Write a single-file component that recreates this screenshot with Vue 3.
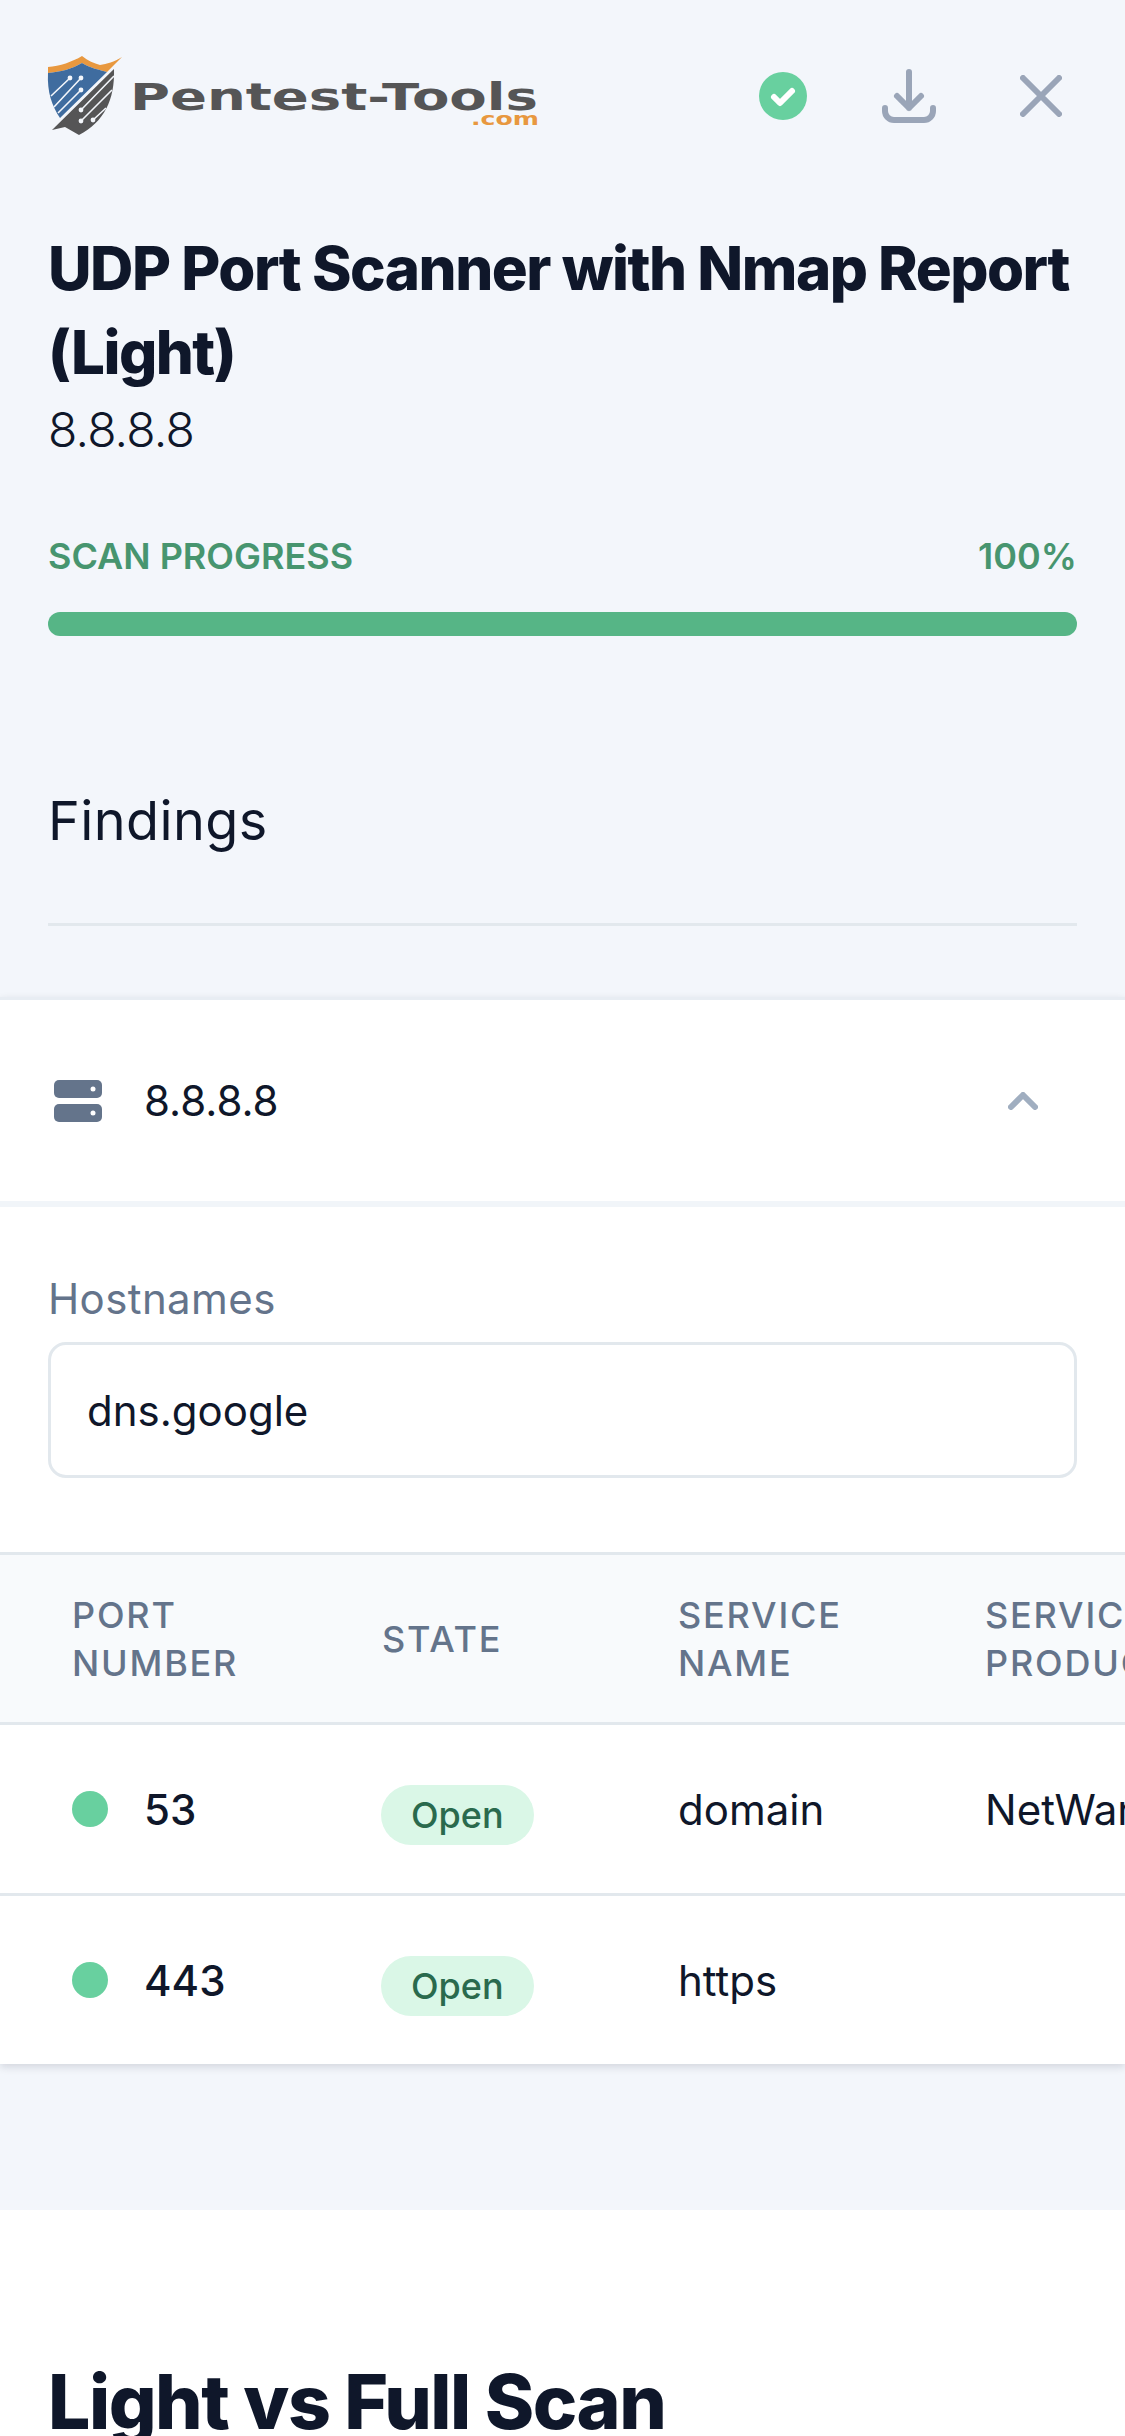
<template>
  <div class="page">
    <section class="top">
      <header class="head">
        <svg class="logo" viewBox="0 0 500 100" width="500" height="100">
          <g transform="translate(-46,-46)">
            <path d="M48 67 C60 66 72 62 82 56 C88 61 94 63 100 65 C107 64 114 62 122 57 L107 72 C100 70 90 68 82 63 C72 69 60 72 48 73 Z" fill="#e8983f" />
            <path d="M48 73 C60 72 72 69 82 63 C90 68 100 70 107 72 L60 118 C52 106 47 92 48 73 Z" fill="#3f6c9f" />
            <path d="M114 69 C115 100 104 122 79 135 L65 127 L52 130 Z" fill="#555556" />
            <g fill="none" stroke="#f3f6fb" stroke-width="1.6">
              <path d="M51 96 L70 78 M54 107 L81 78 M58 113 L81 90" />
              <path d="M81 110 L114 76 M81 121 L112 90 M93 120 L106 108" />
            </g>
            <g fill="#f3f6fb">
              <circle cx="70" cy="78" r="2.4" /><circle cx="81" cy="78" r="2.4" /><circle cx="81" cy="90" r="2.4" />
              <circle cx="81" cy="110" r="2.4" /><circle cx="81" cy="121" r="2.4" /><circle cx="93" cy="120" r="2.4" />
            </g>
          </g>
          <text x="84" y="64" class="logo-name" textLength="408" lengthAdjust="spacingAndGlyphs">Pentest-Tools</text>
          <text x="425" y="79" class="logo-com" textLength="68" lengthAdjust="spacingAndGlyphs">.com</text>
        </svg>
        <div class="actions">
          <svg width="48" height="48" viewBox="0 0 48 48">
            <circle cx="24" cy="24" r="24" fill="#68d09f" />
            <path d="M15 25 L21 31 L33 19" fill="none" stroke="#fff" stroke-width="6" stroke-linecap="round" stroke-linejoin="round" />
          </svg>
          <svg width="54" height="54" viewBox="0 0 54 54">
            <path d="M27 3 V39 M15 27 L27 39 L39 27 M3 39 V42 A9 9 0 0 0 12 51 H42 A9 9 0 0 0 51 42 V39" fill="none" stroke="#9aa5b8" stroke-width="6" stroke-linecap="round" stroke-linejoin="round" />
          </svg>
          <svg class="close" width="42" height="42" viewBox="0 0 42 42">
            <path d="M3 3 L39 39 M39 3 L3 39" fill="none" stroke="#9aa5b8" stroke-width="6" stroke-linecap="round" />
          </svg>
        </div>
      </header>

      <h1>UDP Port Scanner with Nmap Report (Light)</h1>
      <p class="target">8.8.8.8</p>

      <div class="progress-labels">
        <span>SCAN PROGRESS</span>
        <span>100%</span>
      </div>
      <div class="bar"></div>

      <h2>Findings</h2>
    </section>

    <section class="card">
      <div class="host-row">
        <svg width="48" height="42" viewBox="0 0 48 42">
          <rect x="0" y="0" width="48" height="18" rx="5" fill="#64748b" />
          <rect x="0" y="24" width="48" height="18" rx="5" fill="#64748b" />
          <circle cx="39" cy="9" r="2.5" fill="#fff" />
          <circle cx="39" cy="33" r="2.5" fill="#fff" />
        </svg>
        <span class="host-ip">8.8.8.8</span>
        <svg class="chevron" width="30" height="18" viewBox="0 0 30 18">
          <path d="M3 15 L15 3 L27 15" fill="none" stroke="#a0aec0" stroke-width="6" stroke-linecap="round" stroke-linejoin="round" />
        </svg>
      </div>

      <div class="hostnames">
        <label>Hostnames</label>
        <div class="field">dns.google</div>
      </div>

      <div class="table">
        <div class="row thead">
          <div class="c1">PORT<br />NUMBER</div>
          <div class="c2">STATE</div>
          <div class="c3">SERVICE<br />NAME</div>
          <div class="c4">SERVICE<br />PRODUCT</div>
        </div>
        <div v-for="p in ports" :key="p.port" class="row tbody">
          <div class="c1 port"><i class="dot"></i>{{ p.port }}</div>
          <div class="c2"><span class="pill">Open</span></div>
          <div class="c3">{{ p.name }}</div>
          <div class="c4">{{ p.product }}</div>
        </div>
      </div>
    </section>

    <section class="next">
      <h2>Light vs Full Scan</h2>
    </section>
  </div>
</template>

<script setup>
const ports = [
  { port: 53, name: 'domain', product: 'NetWare' },
  { port: 443, name: 'https', product: '' }
]
</script>

<style>
html, body {
  margin: 0;
  background: #f3f6fb;
}
</style>

<style scoped>
.page {
  width: 1125px;
  height: 2436px;
  overflow: hidden;
  font-family: Inter, "Liberation Sans", sans-serif;
  background: #f3f6fb;
  color: #0f172a;
}
.top {
  padding: 46px 48px 0;
}
.head {
  display: flex;
  justify-content: space-between;
  align-items: center;
  height: 100px;
}
.logo {
  margin-left: -2px;
  flex: none;
}
.logo-name {
  font: bold 37px "DejaVu Sans", sans-serif;
  fill: #555556;
}
.logo-com {
  font: bold 18px "DejaVu Sans", sans-serif;
  fill: #e8983f;
}
.actions {
  display: flex;
  align-items: center;
  gap: 75px;
  margin-right: 15px;
}
.close {
  margin-left: 9px;
}
h1 {
  margin: 80px 0 0;
  font-size: 60px;
  line-height: 84px;
  font-weight: 800;
  letter-spacing: -1.5px;
}
.target {
  margin: 0;
  font-size: 48px;
  line-height: 72px;
  font-weight: 300;
  letter-spacing: -0.8px;
}
.progress-labels {
  display: flex;
  justify-content: space-between;
  margin-top: 66px;
  font-size: 36px;
  line-height: 48px;
  font-weight: 600;
  color: #47956f;
}
.bar {
  height: 24px;
  margin-top: 32px;
  border-radius: 12px;
  background: #56b586;
}
.top h2 {
  margin: 149px 0 0;
  padding-bottom: 66px;
  border-bottom: 3px solid #e2e8ed;
  font-size: 54px;
  line-height: 72px;
  font-weight: 400;
  letter-spacing: 0.4px;
}
.card {
  margin-top: 71px;
  background: #fff;
  border-top: 3px solid #e8edf3;
  box-shadow: 0 3px 8px rgba(15, 23, 42, 0.14);
}
.host-row {
  display: flex;
  align-items: center;
  height: 201px;
  padding: 0 87px 0 54px;
  border-bottom: 6px solid #f1f5f9;
}
.host-ip {
  margin-left: 42px;
  font-size: 42px;
}
.chevron {
  margin-left: auto;
}
.hostnames {
  padding: 62px 48px 74px;
}
.hostnames label {
  display: block;
  font-size: 42px;
  line-height: 60px;
  letter-spacing: 0.4px;
  color: #64748b;
}
.field {
  margin-top: 13px;
  height: 130px;
  padding: 0 36px;
  display: flex;
  align-items: center;
  border: 3px solid #e2e8ed;
  border-radius: 18px;
  font-size: 42px;
}
.table {
  overflow: hidden;
}
.row {
  display: flex;
  align-items: center;
  width: 1400px;
}
.thead {
  height: 167px;
  background: #f8fafc;
  border-top: 3px solid #e2e8ed;
  border-bottom: 3px solid #e2e8ed;
  font-size: 36px;
  line-height: 48px;
  font-weight: 500;
  letter-spacing: 1.8px;
  color: #64748b;
}
.tbody {
  height: 168px;
  border-bottom: 3px solid #e2e8ed;
  font-size: 42px;
}
.tbody:last-child {
  border-bottom: 0;
}
.c1 {
  width: 310px;
  padding-left: 72px;
  box-sizing: border-box;
}
.c2 {
  width: 296px;
  margin-left: 72px;
}
.c3 {
  width: 307px;
}
.c4 {
  width: 400px;
}
.port {
  display: flex;
  align-items: center;
  font-weight: 500;
}
.dot {
  width: 36px;
  height: 36px;
  margin-right: 36px;
  border-radius: 50%;
  background: #68d09f;
}
.pill {
  display: inline-block;
  margin: 12px 0 0 -1px;
  padding: 0 30px;
  border-radius: 30px;
  line-height: 60px;
  font-size: 36px;
  font-weight: 500;
  background: #daf7e7;
  color: #2a6a4d;
}
.next {
  margin-top: 146px;
  height: 300px;
  padding: 144px 48px 0;
  background: #fff;
}
.next h2 {
  margin: 0;
  font-size: 75px;
  line-height: 96px;
  font-weight: 800;
  letter-spacing: -1.5px;
}
</style>
